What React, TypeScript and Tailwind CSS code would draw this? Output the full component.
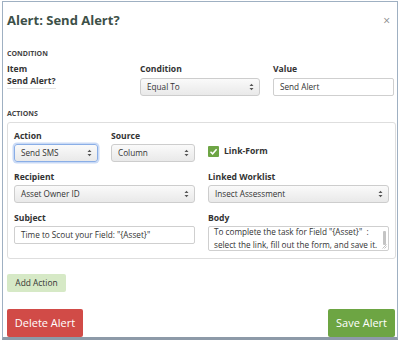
import React from "react";

const font = { fontFamily: "'Open Sans', 'Liberation Sans', sans-serif" };

const Arrows = () => (
  <svg width="5" height="8" viewBox="0 0 5 8" className="shrink-0">
    <path d="M0.5 3 L2.5 0.8 L4.5 3 Z M0.5 5 L2.5 7.2 L4.5 5 Z" fill="#555" />
  </svg>
);

interface SelectProps {
  value: string;
  className?: string;
  focused?: boolean;
}

const FakeSelect: React.FC<SelectProps> = ({ value, className = "", focused = false }) => (
  <div
    className={`h-[18px] flex items-center justify-between pl-[6px] pr-[5px] rounded-[3px] border bg-gradient-to-b from-[#fafafa] to-[#e9e9e9] text-[8.2px] text-[#333] ${
      focused
        ? "border-[#8aaee6] shadow-[0_0_0_1.5px_#c9daf6]"
        : "border-[#cdcdcd]"
    } ${className}`}
  >
    <span>{value}</span>
    <Arrows />
  </div>
);

const Label: React.FC<{ children: React.ReactNode; className?: string }> = ({
  children,
  className = "",
}) => (
  <div className={`text-[8.6px] leading-[11px] font-bold text-[#333] ${className}`}>
    {children}
  </div>
);

const TextBox: React.FC<{ value: string; className?: string }> = ({ value, className = "" }) => (
  <div
    className={`h-[18px] flex items-center pl-[6px] border border-[#cfcfcf] rounded-[2px] bg-white text-[8.2px] text-[#333] ${className}`}
  >
    {value}
  </div>
);

export default function App() {
  return (
    <div className="w-[399px] h-[340px] bg-white pl-[2px] pt-[1px]" style={font}>
      <div className="w-[396px] h-[339px] border border-[#9fb0c2] border-b-[3px] border-b-[#8d9aa8] flex flex-col pl-[3px] pr-[3px] overflow-hidden">
        {/* header */}
        <div className="shrink-0 h-[38px] flex items-center justify-between pl-[1px]">
          <h1 className="text-[13px] font-bold text-[#3d5048]">Alert: Send Alert?</h1>
          <span className="text-[12px] leading-none text-[#8a8a8a] mr-[4px]">×</span>
        </div>

        {/* condition */}
        <div className="shrink-0 mt-[9px] h-[10px] text-[7px] leading-[10px] font-bold text-[#444] pl-[1px]">
          CONDITION
        </div>
        <div className="shrink-0 mt-[5px] flex pl-[1px]">
          <div className="w-[133px]">
            <Label>Item</Label>
            <div className="w-fit mt-[1px] text-[8.6px] leading-[11px] font-bold text-[#333] border-b border-[#e4e4e4] pb-[1px]">
              Send Alert?
            </div>
          </div>
          <div className="w-[120px]">
            <Label>Condition</Label>
            <FakeSelect value="Equal To" className="mt-[3px]" />
          </div>
          <div className="w-[121px] ml-[13px]">
            <Label>Value</Label>
            <TextBox value="Send Alert" className="mt-[3px]" />
          </div>
        </div>

        {/* actions */}
        <div className="shrink-0 mt-[13px] h-[10px] text-[7px] leading-[10px] font-bold text-[#444] pl-[1px]">
          ACTIONS
        </div>
        <div className="shrink-0 mt-[3px] ml-[1px] w-[389px] h-[137px] border border-[#dedede] rounded-[3px] px-[6px] pt-[8px]">
          <div className="grid grid-cols-[181px_181px] gap-x-[13px]">
            <div className="flex gap-x-[13px]">
              <div className="w-[84px]">
                <Label>Action</Label>
                <FakeSelect value="Send SMS" focused className="mt-[2px]" />
              </div>
              <div className="w-[84px]">
                <Label>Source</Label>
                <FakeSelect value="Column" className="mt-[2px]" />
              </div>
            </div>
            <div className="flex items-end pb-[4px]">
              <div className="flex items-center">
                <div className="w-[11px] h-[11px] bg-[#6ea545] rounded-[1px] flex items-center justify-center">
                  <svg width="9" height="9" viewBox="0 0 9 9">
                    <path d="M1.5 4.8 L3.6 6.8 L7.6 2.2" stroke="white" strokeWidth="1.5" fill="none" />
                  </svg>
                </div>
                <span className="ml-[5px] text-[8.6px] font-bold text-[#333]">Link-Form</span>
              </div>
            </div>

            <div className="mt-[10px]">
              <Label>Recipient</Label>
              <FakeSelect value="Asset Owner ID" className="mt-[2px]" />
            </div>
            <div className="mt-[10px]">
              <Label>Linked Worklist</Label>
              <FakeSelect value="Insect Assessment" className="mt-[2px]" />
            </div>

            <div className="mt-[10px]">
              <Label>Subject</Label>
              <TextBox value={'Time to Scout your Field: "{Asset}"'} className="mt-[2px]" />
            </div>
            <div className="mt-[10px]">
              <Label>Body</Label>
              <div className="mt-[2px] relative h-[25px] border border-[#cfcfcf] rounded-[2px] bg-white overflow-hidden">
                <div className="-mt-[2px] pl-[5px] pr-[10px] text-[8.2px] leading-[13px] text-[#333] whitespace-nowrap">
                  <div>To complete the task for Field "{"{Asset}"}"&nbsp; :</div>
                  <div>select the link, fill out the form, and save it.</div>
                </div>
                <div className="absolute right-[2px] top-[4px] w-[3px] h-[14px] bg-[#c4c4c4] rounded-[1px]" />
                <svg width="5" height="5" viewBox="0 0 5 5" className="absolute right-[1px] bottom-[1px]">
                  <path d="M4.5 0.5 L0.5 4.5 M4.5 2.5 L2.5 4.5" stroke="#999" strokeWidth="0.6" />
                </svg>
              </div>
            </div>
          </div>
        </div>

        {/* add action */}
        <div className="shrink-0 mt-[9px] ml-[1px]">
          <button className="h-[18px] w-[59px] bg-[#d6e9c6] rounded-[2px] text-[8.4px] text-[#333]">
            Add Action
          </button>
        </div>

        {/* footer */}
        <div className="shrink-0 mt-[17px] ml-[1px] flex justify-between">
          <button className="h-[28px] w-[76px] bg-[#d14b47] rounded-[2px] text-[11px] text-white">
            Delete Alert
          </button>
          <button className="h-[28px] w-[67px] bg-[#6da543] rounded-[2px] text-[11px] text-white mr-[-1px]">
            Save Alert
          </button>
        </div>
      </div>
    </div>
  );
}
